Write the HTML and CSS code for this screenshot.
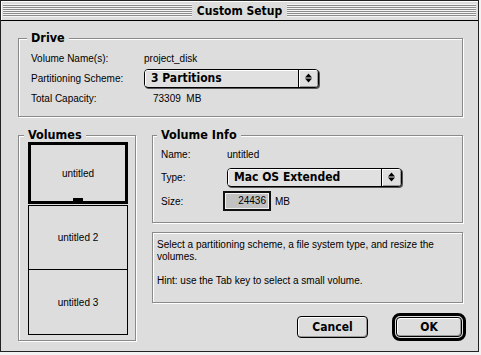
FILE: index.html
```html
<!DOCTYPE html>
<html lang="en">
<head>
    <meta charset="UTF-8">
    <title>Custom Setup</title>
    <link rel="stylesheet" href="styles.css">
</head>
<body>

<div class="window">
    <div class="titlebar">
        <span class="stripes"></span>
        <span class="title">Custom Setup</span>
        <span class="stripes"></span>
    </div>

    <div class="content">
        <fieldset class="group drive">
            <legend>Drive</legend>
            <div class="row">
                <span class="label">Volume Name(s):</span>
                <span class="value">project_disk</span>
            </div>
            <div class="row">
                <span class="label">Partitioning Scheme:</span>
                <div class="popup">
                    <span class="popup-text">3 Partitions</span>
                    <span class="popup-arrows">
                        <svg width="7" height="10" viewBox="0 0 7 10"><path d="M0 4.5 L3.5 0.5 L7 4.5 Z M0 5.5 L7 5.5 L3.5 9.5 Z" fill="#000"/></svg>
                    </span>
                </div>
            </div>
            <div class="row">
                <span class="label">Total Capacity:</span>
                <span class="value capacity">73309&nbsp;&nbsp;MB</span>
            </div>
        </fieldset>

        <div class="lower">
            <fieldset class="group volumes">
                <legend>Volumes</legend>
                <div class="volume-list">
                    <div class="volume selected">
                        <span class="volume-name">untitled</span>
                        <span class="handle"></span>
                    </div>
                    <div class="volume">
                        <span class="volume-name">untitled 2</span>
                    </div>
                    <div class="volume last">
                        <span class="volume-name">untitled 3</span>
                    </div>
                </div>
            </fieldset>

            <div class="right">
                <fieldset class="group info">
                    <legend>Volume Info</legend>
                    <div class="row">
                        <span class="label">Name:</span>
                        <span class="value">untitled</span>
                    </div>
                    <div class="row type-row">
                        <span class="label">Type:</span>
                        <div class="popup">
                            <span class="popup-text">Mac OS Extended</span>
                            <span class="popup-arrows">
                                <svg width="7" height="10" viewBox="0 0 7 10"><path d="M0 4.5 L3.5 0.5 L7 4.5 Z M0 5.5 L7 5.5 L3.5 9.5 Z" fill="#000"/></svg>
                            </span>
                        </div>
                    </div>
                    <div class="row size-row">
                        <span class="label">Size:</span>
                        <div class="size-field"><span>24436</span></div>
                        <span class="unit">MB</span>
                    </div>
                </fieldset>

                <div class="help">
                    <p>Select a partitioning scheme, a file system type, and resize the volumes.</p>
                    <p>Hint: use the Tab key to select a small volume.</p>
                </div>

                <div class="buttons">
                    <button class="btn cancel">Cancel</button>
                    <span class="default-ring"><button class="btn ok">OK</button></span>
                </div>
            </div>
        </div>
    </div>
</div>

</body>
</html>
```

FILE: styles.css
```css
body {
    margin: 0;
    background-color: #f2f2f2;
    font-family: "Liberation Sans", Arial, sans-serif;
    font-size: 10px;
    color: #000;
}

.window {
    width: 479px;
    height: 352px;
    box-sizing: border-box;
    border: 1px solid #222;
    background-color: #dddddd;
    display: flex;
    flex-direction: column;
}

/* title bar */
.titlebar {
    height: 20px;
    box-sizing: border-box;
    border-bottom: 1px solid #000;
    display: flex;
    align-items: center;
    padding: 0 2px;
    box-shadow: inset 1px 1px 0 #fff;
}

.stripes {
    flex: 1;
    height: 13px;
    background: repeating-linear-gradient(to bottom, #f4f4f4 0 1px, #8c8c8c 1px 2px);
}

.title,
.group legend,
.popup,
.btn {
    font-family: "DejaVu Sans Condensed", "DejaVu Sans", sans-serif;
    font-stretch: condensed;
    font-weight: bold;
}

.title {
    font-size: 12px;
    padding: 0 5px;
}

.content {
    padding: 10px 15px 0 17px;
}

/* group boxes */
.group {
    margin: 0;
    min-width: 0;
    border: 1px solid #8a8a8a;
    box-shadow: 1px 1px 0 #fff, inset 1px 1px 0 #fff;
}

.group legend {
    font-size: 12.5px;
    line-height: 14px;
    padding: 0 4px;
    margin-left: -4px;
    background-color: #dddddd;
}

.drive {
    padding: 3px 12px 8px;
}

.row {
    display: flex;
    align-items: center;
    height: 20px;
}

.drive .label {
    width: 113px;
}

.capacity {
    padding-left: 9px;
}

/* pop-up menus */
.popup {
    width: 175px;
    height: 19px;
    box-sizing: border-box;
    display: flex;
    border: 1px solid #000;
    border-radius: 4px;
    box-shadow: 1px 1px 0 #555;
    background-color: #e0e0e0;
    font-size: 12px;
    overflow: hidden;
}

.popup-text {
    flex: 1;
    padding-left: 6px;
    line-height: 17px;
    box-shadow: inset 1px 1px 0 #fff;
}

.popup-arrows {
    width: 19px;
    border-left: 1px solid #000;
    display: flex;
    align-items: center;
    justify-content: center;
    box-shadow: inset 1px 1px 0 #fff, inset -1px -1px 0 #999;
}

/* lower half */
.lower {
    display: flex;
    margin-top: 11px;
}

.volumes {
    width: 118px;
    box-sizing: border-box;
    padding: 0 7px 5px 9px;
}

.volume-list {
    display: flex;
    flex-direction: column;
}

.volume {
    height: 65px;
    box-sizing: border-box;
    border: 1px solid #000;
    display: flex;
    flex-direction: column;
    align-items: center;
    justify-content: center;
}

.volume.selected {
    height: 62px;
    border-width: 3px;
    margin-bottom: 1px;
    padding-top: 3px;
}

.volume.last {
    border-top: none;
}

.volume-name {
    flex: 1;
    display: flex;
    align-items: center;
}

.handle {
    width: 10px;
    height: 3px;
    background-color: #000;
}

.right {
    width: 311px;
    margin-left: 16px;
    display: flex;
    flex-direction: column;
}

.info {
    padding: 2px 8px 11px;
}

.info .label {
    width: 66px;
}

.type-row {
    margin-top: 3px;
}

.size-row {
    margin-top: 4px;
}

.size-field {
    width: 48px;
    height: 20px;
    box-sizing: border-box;
    margin-left: -4px;
    border: 2px solid #111;
    padding: 1px;
    background-color: #f0f0f0;
}

.size-field span {
    display: block;
    height: 100%;
    background-color: #c2c2c2;
    text-align: right;
    padding-right: 2px;
    line-height: 14px;
}

.unit {
    margin-left: 4px;
}

/* help text */
.help {
    margin-top: 9px;
    height: 71px;
    box-sizing: border-box;
    padding: 6px 4px 0;
    border: 1px solid #8a8a8a;
    box-shadow: 1px 1px 0 #fff, inset 1px 1px 0 #fff;
    line-height: 12px;
}

.help p {
    margin: 0 0 12px;
}

/* buttons */
.buttons {
    display: flex;
    justify-content: flex-end;
    align-items: center;
    margin-top: 10px;
    margin-right: -3px;
    gap: 24px;
}

.btn {
    height: 22px;
    box-sizing: border-box;
    padding: 0;
    border: 1px solid #000;
    border-radius: 4px;
    background-color: #dddddd;
    box-shadow: inset 1px 1px 0 #fff, inset -1px -1px 0 #999;
    font-size: 12px;
    color: #000;
}

.cancel {
    width: 71px;
}

.default-ring {
    display: flex;
    border: 3px solid #000;
    border-radius: 8px;
    padding: 1px;
}

.ok {
    width: 66px;
    height: 20px;
}
```
